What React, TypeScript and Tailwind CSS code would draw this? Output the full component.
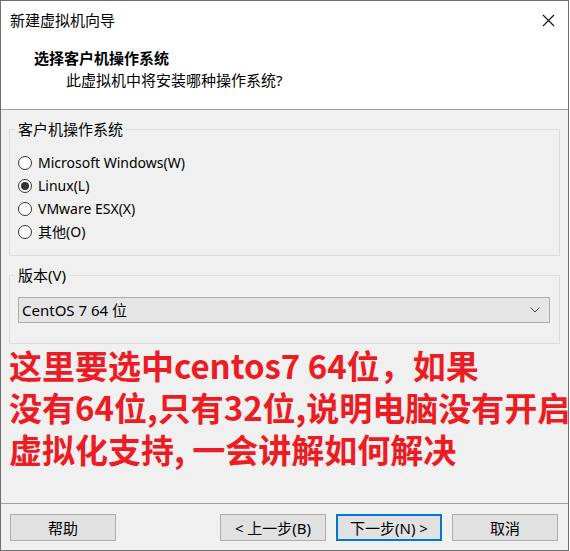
import React from 'react'

const ui = "font-['Noto_Sans','Noto_Sans_CJK_SC',sans-serif]"

function Radio({ label, checked }: { label: string; checked?: boolean }) {
  return (
    <div className="flex items-center h-[23px] pl-[8px]">
      <span className="w-[14px] h-[14px] rounded-full border border-[#333] bg-white flex items-center justify-center">
        {checked && <span className="w-[8px] h-[8px] rounded-full bg-[#333]" />}
      </span>
      <span className="ml-[6px] text-[14px] leading-[18px] text-[#000]">{label}</span>
    </div>
  )
}

function Btn({ children, primary }: { children: React.ReactNode; primary?: boolean }) {
  return (
    <button
      className={
        'w-[106px] h-[27px] bg-[#e1e1e1] text-[15px] leading-[18px] text-black flex items-center justify-center ' +
        (primary ? 'border-2 border-[#0078d7]' : 'border border-[#adadad]')
      }
    >
      {children}
    </button>
  )
}

export default function App() {
  return (
    <div className={`w-[570px] h-[551px] bg-white overflow-hidden ${ui}`}>
      <div className="w-[569px] h-[551px] border border-[#6f6f6f] flex flex-col">
        {/* Header */}
        <div className="h-[109px] bg-white border-b border-[#a0a0a0] shrink-0">
          <div className="flex items-center justify-between h-[38px] pl-[9px] pr-[13px]">
            <span className="text-[15px] leading-[18px] text-black">新建虚拟机向导</span>
            <svg width="13" height="13" viewBox="0 0 13 13">
              <path d="M1 1 L12 12 M12 1 L1 12" stroke="#111" strokeWidth="1.1" />
            </svg>
          </div>
          <div className="pl-[33px] mt-[10px] text-[15px] leading-[18px] font-bold text-black">选择客户机操作系统</div>
          <div className="pl-[65px] mt-[4px] text-[15px] leading-[18px] text-black">此虚拟机中将安装哪种操作系统?</div>
        </div>

        {/* Body */}
        <div className="flex-1 bg-[#f0f0f0] flex flex-col">
          <div className="flex-1 pt-[10px]">
            <fieldset className="mx-[8px] border border-[#dcdcdc] pb-[12px]">
              <legend className="ml-[5px] px-[3px] text-[15px] leading-[18px] text-black">客户机操作系统</legend>
              <div className="mt-[13px]">
                <Radio label="Microsoft Windows(W)" />
                <Radio label="Linux(L)" checked />
                <Radio label="VMware ESX(X)" />
                <Radio label="其他(O)" />
              </div>
            </fieldset>

            <fieldset className="mx-[8px] mt-[10px] border border-[#dcdcdc] pb-[20px]">
              <legend className="ml-[5px] px-[3px] text-[15px] leading-[18px] text-black">版本(V)</legend>
              <div className="mt-[13px] ml-[8px] mr-[9px] h-[26px] border border-[#adadad] bg-[#e5e5e5] flex items-center justify-between pl-[3px] pr-[9px]">
                <span className="text-[15px] leading-[18px] text-black">CentOS 7 64 位</span>
                <svg width="10" height="6" viewBox="0 0 10 6">
                  <path d="M0.5 0.5 L5 5 L9.5 0.5" fill="none" stroke="#444" strokeWidth="1" />
                </svg>
              </div>
            </fieldset>

            <div className="pl-[8px] text-[33px] leading-[42px] font-bold text-[#ec1c24] whitespace-nowrap font-['Noto_Sans_CJK_SC',sans-serif]">
              <div>这里要选中centos7 64位，如果</div>
              <div>没有64位,只有32位,说明电脑没有开启</div>
              <div>虚拟化支持, 一会讲解如何解决</div>
            </div>
          </div>

          {/* Footer */}
          <div className="h-[47px] border-t border-[#a0a0a0] flex items-start pt-[10px] pl-[9px] pr-[10px]">
            <Btn>帮助</Btn>
            <div className="flex-1" />
            <Btn>&lt; 上一步(B)</Btn>
            <div className="w-[10px]" />
            <Btn primary>下一步(N) &gt;</Btn>
            <div className="w-[10px]" />
            <Btn>取消</Btn>
          </div>
        </div>
      </div>
    </div>
  )
}
